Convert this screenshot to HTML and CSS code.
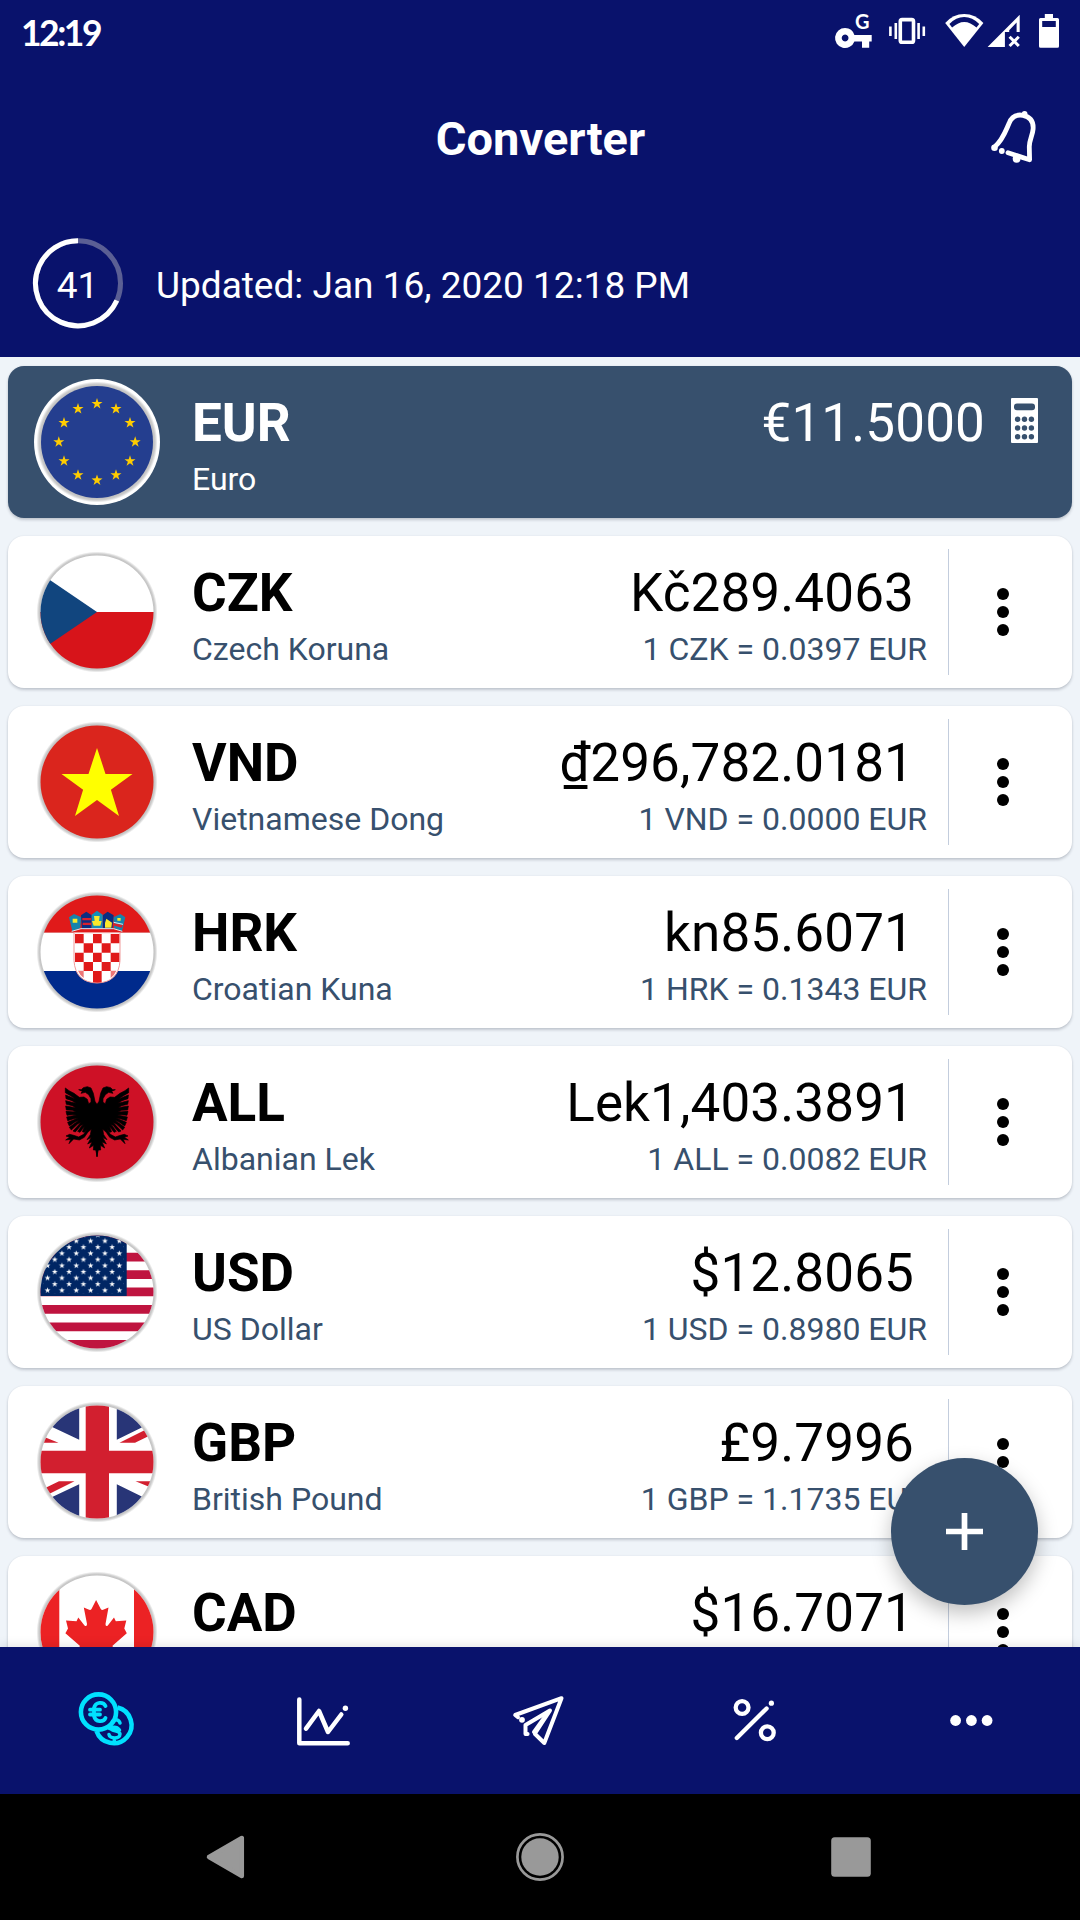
FILE: index.html
```html
<!DOCTYPE html>
<html lang="en">
<head>
<meta charset="utf-8">
<title>Converter</title>
<link rel="stylesheet" href="styles.css">
</head>
<body>
<svg class="defs" width="0" height="0" aria-hidden="true">
  <defs>
    <clipPath id="disc"><circle cx="64" cy="64" r="56.500"/></clipPath>
    <polygon id="star" points="0,-10 2.3,-3.2 9.5,-3.1 3.7,1.2 5.9,8.1 0,3.9 -5.9,8.1 -3.7,1.2 -9.5,-3.1 -2.3,-3.2"/>
    <radialGradient id="ring" gradientUnits="userSpaceOnUse" cx="64" cy="64" r="60.500">
      <stop offset=".92" stop-color="#bcbcbc"/>
      <stop offset=".96" stop-color="#cccccc"/>
      <stop offset="1" stop-color="#cccccc" stop-opacity="0"/>
    </radialGradient>
    <pattern id="stars" patternUnits="userSpaceOnUse" x="7.4" y="6.85" width="14.35" height="12.33">
      <g fill="#fff">
        <use href="#star" transform="translate(7.18 6.15) scale(.31)"/>
        <use href="#star" transform="scale(.31)"/>
        <use href="#star" transform="translate(14.35 0) scale(.31)"/>
        <use href="#star" transform="translate(0 12.33) scale(.31)"/>
        <use href="#star" transform="translate(14.35 12.33) scale(.31)"/>
      </g>
    </pattern>
    <g id="eagle-half">
      <path d="M292 225 L285 214 280 190 273 174 262 170 250 173 244 179 236 179 247 184 243 190 256 187 266 194 273 206 273 217 266 221 262 208 252 201 238 202 222 190 207 182 196 174 196 188 213 198 226 207 197 195 198 206 216 212 228 220 197 212 199 223 217 227 228 233 197 228 199 240 217 241 228 246 198 244 201 256 218 254 230 255 200 261 203 272 221 266 234 264 203 277 208 288 225 276 238 270 208 292 214 300 232 283 243 277 219 303 226 306 242 287 250 282 233 304 240 307 254 288 247 305 253 307 262 297 251 313 236 321 221 316 209 313 198 318 209 322 197 330 212 328 207 341 221 327 238 330 253 322 264 306 274 298 271 314 261 329 274 322 263 342 276 335 268 354 281 346 280 360 287 360 292 380Z"/>
    </g>
  </defs>
</svg>

<div class="screen">
  <header class="header">
    <div class="status">
      <span class="clock">12:19</span>
      <svg class="s-key" width="40" height="39" viewBox="0 0 40 39" fill="#fff">
        <path fill-rule="evenodd" d="M11.1 16a10 10 0 0 1 9.3 7H37.7V29.5H35.2V35.8H28V29.5H20.4A10 10 0 1 1 11.1 16ZM11.1 22.6a3.4 3.4 0 1 0 .01 0Z"/>
        <text x="21" y="17.300" class="g-mark">G</text>
      </svg>
      <svg class="s-vibrate" width="40" height="39" viewBox="0 0 40 39" fill="none" stroke="#fff">
        <rect x="12.3" y="7.6" width="13.2" height="22.6" rx="1.8" stroke-width="3.6"/>
        <path d="M7.8 11V27M30.6 11V27M2.4 14.5V24M35.8 14.5V24" stroke-width="2.6"/>
      </svg>
      <svg class="s-wifi" width="41" height="39" viewBox="0 0 41 39">
        <path fill="#fff" d="M20.2 35 1.2 11Q9 2 20.2 2T39.4 11Z"/>
        <path fill="#09126c" d="M5.4 12Q12 5 20.2 5T35.2 12L32.5 15.6Q20.2 4.4 8.1 15.6Z"/>
      </svg>
      <svg class="s-signal" width="34" height="39" viewBox="0 0 34 39">
        <path fill="#fff" d="M.6 35 32.7 2.7V20H29.6V10.5L22.2 18.2V20H17.9V35Z"/>
        <path stroke="#fff" stroke-width="3" d="M22.6 24.7 31.8 34M31.8 24.7 22.6 34"/>
      </svg>
      <svg class="s-battery" width="22" height="39" viewBox="0 0 22 39">
        <path fill="#fff" fill-rule="evenodd" d="M6.8 2H15V6H19.5Q21 6 21 7.5V34.2Q21 35.7 19.5 35.7H2.5Q1 35.7 1 34.2V7.5Q1 6 2.5 6H6.8ZM4.2 9V15H17.8V9Z"/>
      </svg>
    </div>
    <div class="titlebar">
      <h1 class="title">Converter</h1>
      <svg class="bell" width="60" height="60" viewBox="0 0 60 60" fill="none" stroke="#fff" stroke-width="4.8" stroke-linecap="round" stroke-linejoin="round">
        <path d="M10.5 40C19 33 22 23 25 16.500C27.500 9.500 33 7.300 39 8.300C46.500 9.800 49.600 15 49.100 22C48.500 29 45.200 33 45.300 40L45.600 52.800 24 45.800"/>
        <g fill="#fff" stroke="none"><circle cx="10.500" cy="40.800" r="3.300"/><circle cx="17.800" cy="44" r="2.900"/><circle cx="40.600" cy="6.800" r="2.900"/><circle cx="32.600" cy="51.800" r="3.900"/></g>
      </svg>
    </div>
    <div class="updated">
      <svg class="timer" width="92" height="96" viewBox="0 0 92 96" fill="none" stroke-width="5">
        <circle cx="46" cy="45.300" r="42.500" stroke="#5b5f94"/>
        <circle cx="46" cy="45.300" r="42.500" stroke="#fff" pathLength="60" stroke-dasharray="41 19" transform="rotate(24 46 45.300)"/>
        <text x="45.500" y="60" class="timer-text">41</text>
      </svg>
      <span class="updated-text">Updated: Jan 16, 2020 12:18 PM</span>
    </div>
  </header>

  <main class="list">
    <article class="card base">
      <svg class="flag" viewBox="0 0 128 128">
        <circle cx="64" cy="64" r="63" fill="#fff"/>
        <circle cx="64" cy="64" r="60.500" fill="url(#ring)"/>
        <circle cx="64" cy="64" r="56" fill="#243e8f"/>
        <g fill="#fc0">
          <use href="#star" transform="translate(64 25.800) scale(.58)"/>
          <use href="#star" transform="translate(83 30.900) scale(.58)"/>
          <use href="#star" transform="translate(97 44.900) scale(.58)"/>
          <use href="#star" transform="translate(102.200 64) scale(.58)"/>
          <use href="#star" transform="translate(97 83.100) scale(.58)"/>
          <use href="#star" transform="translate(83 97.100) scale(.58)"/>
          <use href="#star" transform="translate(64 102.200) scale(.58)"/>
          <use href="#star" transform="translate(45 97.100) scale(.58)"/>
          <use href="#star" transform="translate(31 83.100) scale(.58)"/>
          <use href="#star" transform="translate(25.800 64) scale(.58)"/>
          <use href="#star" transform="translate(31 44.900) scale(.58)"/>
          <use href="#star" transform="translate(45 30.900) scale(.58)"/>
        </g>
      </svg>
      <div class="names"><strong class="code">EUR</strong><span class="name">Euro</span></div>
      <div class="base-amount">€11.5000</div>
      <svg class="calc" width="27" height="45" viewBox="0 0 27 45">
        <rect width="27" height="45" rx="1" fill="#fff"/>
        <g fill="#37506d"><rect x="3" y="5.600" width="21" height="6.600" rx="3"/>
        <circle cx="6.600" cy="21.300" r="2.700"/><circle cx="13.500" cy="21.300" r="2.700"/><circle cx="20.400" cy="21.300" r="2.700"/>
        <circle cx="6.600" cy="30" r="2.700"/><circle cx="13.500" cy="30" r="2.700"/><circle cx="20.400" cy="30" r="2.700"/>
        <circle cx="6.600" cy="38.700" r="2.700"/><circle cx="13.500" cy="38.700" r="2.700"/><circle cx="20.400" cy="38.700" r="2.700"/></g>
      </svg>
    </article>

    <article class="card">
      <svg class="flag" viewBox="0 0 128 128">
        <circle cx="64" cy="64" r="60.500" fill="url(#ring)"/>
        <g clip-path="url(#disc)"><path fill="#fff" d="M0 0H128V64H0Z"/><path fill="#d7141a" d="M0 64H128V128H0Z"/><path fill="#11457e" d="M64 64 0 20.500V107.500Z"/></g>
      </svg>
      <div class="names"><strong class="code">CZK</strong><span class="name">Czech Koruna</span></div>
      <div class="values"><span class="amount">Kč289.4063</span><span class="rate">1 CZK = 0.0397 EUR</span></div>
      <div class="menu"><i></i><i></i><i></i></div>
    </article>

    <article class="card">
      <svg class="flag" viewBox="0 0 128 128">
        <circle cx="64" cy="64" r="60.500" fill="url(#ring)"/>
        <circle cx="64" cy="64" r="56.500" fill="#da251d"/>
        <polygon fill="#ff0" points="64,30 72.500,55.900 99.500,55.900 77.900,71.700 86,98 64,82 42,98 50.100,71.700 28.500,55.900 55.500,55.900"/>
      </svg>
      <div class="names"><strong class="code">VND</strong><span class="name">Vietnamese Dong</span></div>
      <div class="values"><span class="amount">₫296,782.0181</span><span class="rate">1 VND = 0.0000 EUR</span></div>
      <div class="menu"><i></i><i></i><i></i></div>
    </article>

    <article class="card">
      <svg class="flag" viewBox="0 0 128 128">
        <circle cx="64" cy="64" r="60.500" fill="url(#ring)"/>
        <g clip-path="url(#disc)"><path fill="#e01a1a" d="M0 0H128V44.700H0Z"/><path fill="#fff" d="M0 44.700H128V83H0Z"/><path fill="#002a8c" d="M0 83H128V128H0Z"/></g>
        <g transform="translate(-33 -188) scale(.33333)">
          <path d="M222 698H360V782Q356 847 291 849Q226 847 222 782Z" fill="#fff" stroke="#f09a9a" stroke-width="3"/>
          <path fill="#e01a1a" d="M225 702h26v28h-26zM279 702h26v28h-26zM332 702h26v28h-26zM251 730h28v28h-28zM305 730h27v28h-27zM225 758h26v28h-26zM279 758h26v28h-26zM332 758h26v28h-26zM251 786h28v27h-28zM305 786h27v27h-27zM279 813h26v34q-14 2-26 0z"/>
          <path fill="#e01a1a" d="M234 812H251V834Q240 826 234 812ZM332 812H349Q343 826 332 834Z" opacity=".6"/>
          <path fill="#1683ad" d="M207 652 222 642 244 652 241 684 217 694ZM340 652 361 642 376 652 366 694 342 684Z"/>
          <path fill="#0b2e82" d="M243 646 259 635 275 646 274 685 246 688ZM308 646 323 635 341 646 337 688 309 685Z"/>
          <path fill="#1590b8" d="M275 644 291 632 308 644 308 685H275Z"/>
          <path fill="#fae92c" d="M218 656h14v12h-14zM282 648h17l-2 15h8l-4 14H281l-5-14h8zM315 669 319 656 336 668 334 683H315ZM352 654h10v8h-10z"/>
          <path fill="#d9212d" d="M247 654 273 654V661H247ZM248 668 273 668V675H248ZM340 669 368 675 365 683 338 676Z"/>
          <path fill="none" stroke="#dcebf0" stroke-width="3" d="M215 694 243 686H341L367 694M341 667 369 673"/>
        </g>
      </svg>
      <div class="names"><strong class="code">HRK</strong><span class="name">Croatian Kuna</span></div>
      <div class="values"><span class="amount">kn85.6071</span><span class="rate">1 HRK = 0.1343 EUR</span></div>
      <div class="menu"><i></i><i></i><i></i></div>
    </article>

    <article class="card">
      <svg class="flag" viewBox="0 0 128 128">
        <circle cx="64" cy="64" r="60.500" fill="url(#ring)"/>
        <circle cx="64" cy="64" r="56.500" fill="#ce1126"/>
        <g stroke="#000" stroke-width="2">
          <use href="#eagle-half" transform="translate(-33 -28) scale(.33333)"/>
          <use href="#eagle-half" transform="translate(161 -28) scale(-.33333 .33333)"/>
        </g>
      </svg>
      <div class="names"><strong class="code">ALL</strong><span class="name">Albanian Lek</span></div>
      <div class="values"><span class="amount">Lek1,403.3891</span><span class="rate">1 ALL = 0.0082 EUR</span></div>
      <div class="menu"><i></i><i></i><i></i></div>
    </article>

    <article class="card">
      <svg class="flag" viewBox="0 0 128 128">
        <circle cx="64" cy="64" r="60.500" fill="url(#ring)"/>
        <g clip-path="url(#disc)">
          <path fill="#fff" d="M0 0H128V128H0Z"/>
          <path fill="#bf143f" d="M0 7.200H128V15.900H0ZM0 24.700H128V33.400H0ZM0 42.200H128V50.900H0ZM0 59.600H128V68.300H0ZM0 77H128V85.700H0ZM0 94.600H128V103.300H0ZM0 112H128V121H0Z"/>
          <path fill="#002664" d="M0 0H93.700V68H0Z"/>
          <path fill="url(#stars)" d="M10 8H91V65.500H10Z"/>
        </g>
      </svg>
      <div class="names"><strong class="code">USD</strong><span class="name">US Dollar</span></div>
      <div class="values"><span class="amount">$12.8065</span><span class="rate">1 USD = 0.8980 EUR</span></div>
      <div class="menu"><i></i><i></i><i></i></div>
    </article>

    <article class="card">
      <svg class="flag" viewBox="0 0 128 128">
        <circle cx="64" cy="64" r="60.500" fill="url(#ring)"/>
        <g clip-path="url(#disc)">
          <path fill="#fff" d="M0 0H128V128H0Z"/>
          <path fill="#283577" d="M46.200 0V41.800L-4 18V0ZM83.800 0V41.800L132 18V0ZM46.200 128V86.200L-4 110V128ZM83.800 128V86.200L132 110V128Z"/>
          <path fill="#d21f2f" d="M0 34.500 25.500 44.700H0ZM86.500 44.700H102L128 32V24ZM128 93.500 102.500 83.300H128ZM41.500 83.300H26L0 96V104Z"/>
          <path fill="#d21f2f" d="M52.700 0H76V52.700H128V75.300H76V128H52.700V75.300H0V52.700H52.700Z"/>
        </g>
      </svg>
      <div class="names"><strong class="code">GBP</strong><span class="name">British Pound</span></div>
      <div class="values"><span class="amount">£9.7996</span><span class="rate">1 GBP = 1.1735 EUR</span></div>
      <div class="menu"><i></i><i></i><i></i></div>
    </article>

    <article class="card">
      <svg class="flag" viewBox="0 0 128 128">
        <circle cx="64" cy="64" r="60.500" fill="url(#ring)"/>
        <g clip-path="url(#disc)">
          <path fill="#fff" d="M0 0H128V128H0Z"/>
          <path fill="#ec2224" d="M0 0H26.300V128H0ZM101 0H128V128H101Z"/>
          <path fill="#ec2224" d="M63.100 32 58.500 41Q57.500 42.500 55.500 41.500L50.800 39.500 54 56Q54 59 51.500 57.500L45.300 49.600 43.500 53.200 33 52.400 35 60.500 32.400 65.300 46.800 77.800 45.500 84 62.500 82V96H64V82L81 84 79.500 77.800 93.800 65.300 91.300 60.500 93.300 52.400 82.800 53.200 81 49.600 74.800 57.500Q72.500 59 72.500 56L75.500 39.500 70.800 41.500Q68.800 42.500 67.800 41Z"/>
        </g>
      </svg>
      <div class="names"><strong class="code">CAD</strong></div>
      <div class="values"><span class="amount">$16.7071</span></div>
      <div class="menu"><i></i><i></i><i></i></div>
    </article>

    <button class="fab" aria-label="Add currency">
      <svg width="38" height="38" viewBox="0 0 38 38" stroke="#fff" stroke-width="5.700"><path d="M0 18.500H37M18.500 0V37"/></svg>
    </button>
  </main>

  <nav class="tabs">
    <a class="tab"><svg class="tab-icon" viewBox="0 0 60 60" fill="none" stroke="#00e1ff" stroke-width="4.600">
      <path d="M39.500 16.600A18 18 0 1 1 18.500 40"/>
      <circle cx="20.500" cy="21" r="17.600"/>
      <path class="round" d="M27.500 15C25.500 10.500 17.500 10.500 16 17V25C17.500 31.500 25.500 31.500 27.500 27M12 18.700H22M12 23.500H22" stroke-width="3.800"/>
      <path class="round" d="M42 32C41 28.500 37.500 28 34.500 30.200M32 36C32.500 41 41.500 38.500 42 43C42 48.500 31.500 48 31 43.500M31.500 37.500Q38 34.500 41.500 39M36.300 48.500V51M37.500 27.500V26" stroke-width="3.500"/>
    </svg></a>
    <a class="tab"><svg class="tab-icon" viewBox="0 0 60 60" fill="none" stroke="#fff" stroke-width="4.500">
      <path class="round" d="M5.300 8.500V52.300H53.700M12 37.600 25 20 34 41 47.300 23.500"/><circle cx="51.400" cy="17.200" r="2.700" fill="#fff" stroke="none"/>
    </svg></a>
    <a class="tab"><svg class="tab-icon" viewBox="0 0 60 60" fill="none" stroke="#fff" stroke-width="4">
      <path class="round" d="M8 26.200 5.200 24 51.500 7.200 34.300 52 24.800 42.700 40 19.500 15.500 34V43H17.600"/><path class="round" d="M23.500 41 35 25" stroke-width="3"/><circle cx="12" cy="28.800" r="2.900" fill="#fff" stroke="none"/>
    </svg></a>
    <a class="tab"><svg class="tab-icon" viewBox="0 0 60 60" fill="none" stroke="#fff" stroke-width="4.300">
      <circle cx="16.100" cy="16.500" r="6.400"/><circle cx="41.300" cy="41.800" r="6.400"/><path class="round" d="M10.800 47 40.600 17.500"/><circle cx="45.400" cy="12.200" r="2.600" fill="#fff" stroke="none"/>
    </svg></a>
    <a class="tab"><svg class="tab-icon" viewBox="0 0 60 60" fill="#fff">
      <circle cx="13.600" cy="29.500" r="5.400"/><circle cx="29.400" cy="29.500" r="5.400"/><circle cx="45.100" cy="29.500" r="5.400"/>
    </svg></a>
  </nav>

  <footer class="sysnav">
    <svg width="50" height="50" viewBox="0 0 50 50"><path d="M5 25 37.800 6V44Z" fill="#999" stroke="#999" stroke-width="4.500" stroke-linejoin="round"/></svg>
    <svg width="50" height="50" viewBox="0 0 50 50"><circle cx="25" cy="25" r="22.600" fill="none" stroke="#999" stroke-width="2.700"/><circle cx="25" cy="25" r="18.700" fill="#999"/></svg>
    <svg width="50" height="50" viewBox="0 0 50 50"><rect x="5.200" y="5.200" width="39.600" height="39.600" rx="3.500" fill="#999"/></svg>
  </footer>
</div>
</body>
</html>
```
FILE: styles.css
```css
* { box-sizing: border-box; }

body {
  margin: 0;
  font-family: Roboto, sans-serif;
  background: #000;
}

.defs { position: absolute; }

.screen {
  display: flex;
  flex-direction: column;
  width: 1080px;
  height: 1920px;
  overflow: hidden;
}

.header {
  flex: none;
  height: 357px;
  background: #09126c;
  color: #fff;
}

.status {
  display: flex;
  align-items: center;
  height: 63px;
  padding: 0 20px 0 21px;
}

.clock {
  margin-right: auto;
  padding-top: 2px;
  font-family: Lato, sans-serif;
  font-weight: 700;
  font-size: 35.5px;
  line-height: 44px;
  letter-spacing: -2.5px;
}

.s-key { overflow: visible; }
.g-mark { font: 700 20px/24px Lato, sans-serif; }
.s-vibrate { margin-left: 14px; }
.s-wifi { margin-left: 16px; }
.s-signal { margin-left: 2px; }
.s-battery { margin-left: 17px; }

.titlebar {
  display: grid;
  grid-template-columns: 1fr auto 1fr;
  align-items: center;
  height: 152px;
  padding-right: 36px;
  padding-left: 37px;
}

.title {
  grid-column: 2;
  margin: 0;
  font-size: 47px;
  line-height: 56px;
  font-weight: 700;
}

.bell {
  justify-self: end;
  margin-bottom: 4px;
}

.updated {
  display: flex;
  align-items: center;
  gap: 32px;
  height: 142px;
  padding-left: 32px;
}

.timer-text {
  font-size: 37px;
  text-anchor: middle;
  fill: #fff;
}

.updated-text {
  font-size: 37px;
  line-height: 44px;
}

.list {
  position: relative;
  flex: none;
  display: flex;
  flex-direction: column;
  gap: 18px;
  height: 1290px;
  padding: 9px 8px 0;
  overflow: hidden;
  background: #eff4f9;
}

.card {
  flex: none;
  display: flex;
  height: 152px;
  padding-left: 25px;
  border-radius: 16px;
  background: #fff;
  color: #000;
  box-shadow: 0 2px 3px rgba(20, 30, 50, .2), 0 0 2px rgba(20, 30, 50, .08);
}

.base {
  padding-right: 34px;
  background: #37506d;
  color: #fff;
}

.flag {
  flex: none;
  width: 128px;
  height: 128px;
  margin: 12px 31px 0 0;
}

.names,
.values {
  display: flex;
  flex-direction: column;
  gap: 6px;
  padding-top: 26px;
}

.names { flex: 1; }

.code,
.amount,
.base-amount {
  font-size: 53px;
  line-height: 62px;
  white-space: nowrap;
}

.amount,
.base-amount { letter-spacing: .12px; }

.name,
.rate {
  font-size: 32px;
  line-height: 38px;
  color: #37506d;
  white-space: nowrap;
}

.base .name { color: #fff; }
.base-amount { padding-top: 26px; }
.calc { margin: 32px 0 0 26px; }

.values {
  align-items: flex-end;
  margin-right: 21px;
}

.amount { padding-right: 13px; }

.menu {
  display: flex;
  flex-direction: column;
  align-items: center;
  justify-content: center;
  gap: 5.7px;
  width: 124px;
  height: 126px;
  margin-top: 13px;
  padding-right: 16px;
  border-left: 1px solid #c3cddd;
}

.menu i {
  width: 12px;
  height: 12px;
  border-radius: 50%;
  background: #000;
}

.fab {
  position: absolute;
  top: 1101px;
  left: 891px;
  display: flex;
  align-items: center;
  justify-content: center;
  width: 147px;
  height: 147px;
  padding: 0;
  border: 0;
  border-radius: 50%;
  background: #37506d;
  box-shadow: 0 8px 20px rgba(0, 0, 0, .25);
}

.tabs {
  position: relative;
  flex: none;
  display: grid;
  grid-template-columns: repeat(5, 1fr);
  height: 147px;
  background: #09126c;
  box-shadow: 0 -2px 10px rgba(0, 0, 0, .1);
}

.tab {
  display: flex;
  align-items: center;
  justify-content: center;
}

.tab-icon { width: 60px; height: 60px; }
.round { stroke-linecap: round; stroke-linejoin: round; }

.sysnav {
  display: flex;
  align-items: center;
  justify-content: center;
  gap: 261px;
  height: 126px;
  background: #000;
}
```
